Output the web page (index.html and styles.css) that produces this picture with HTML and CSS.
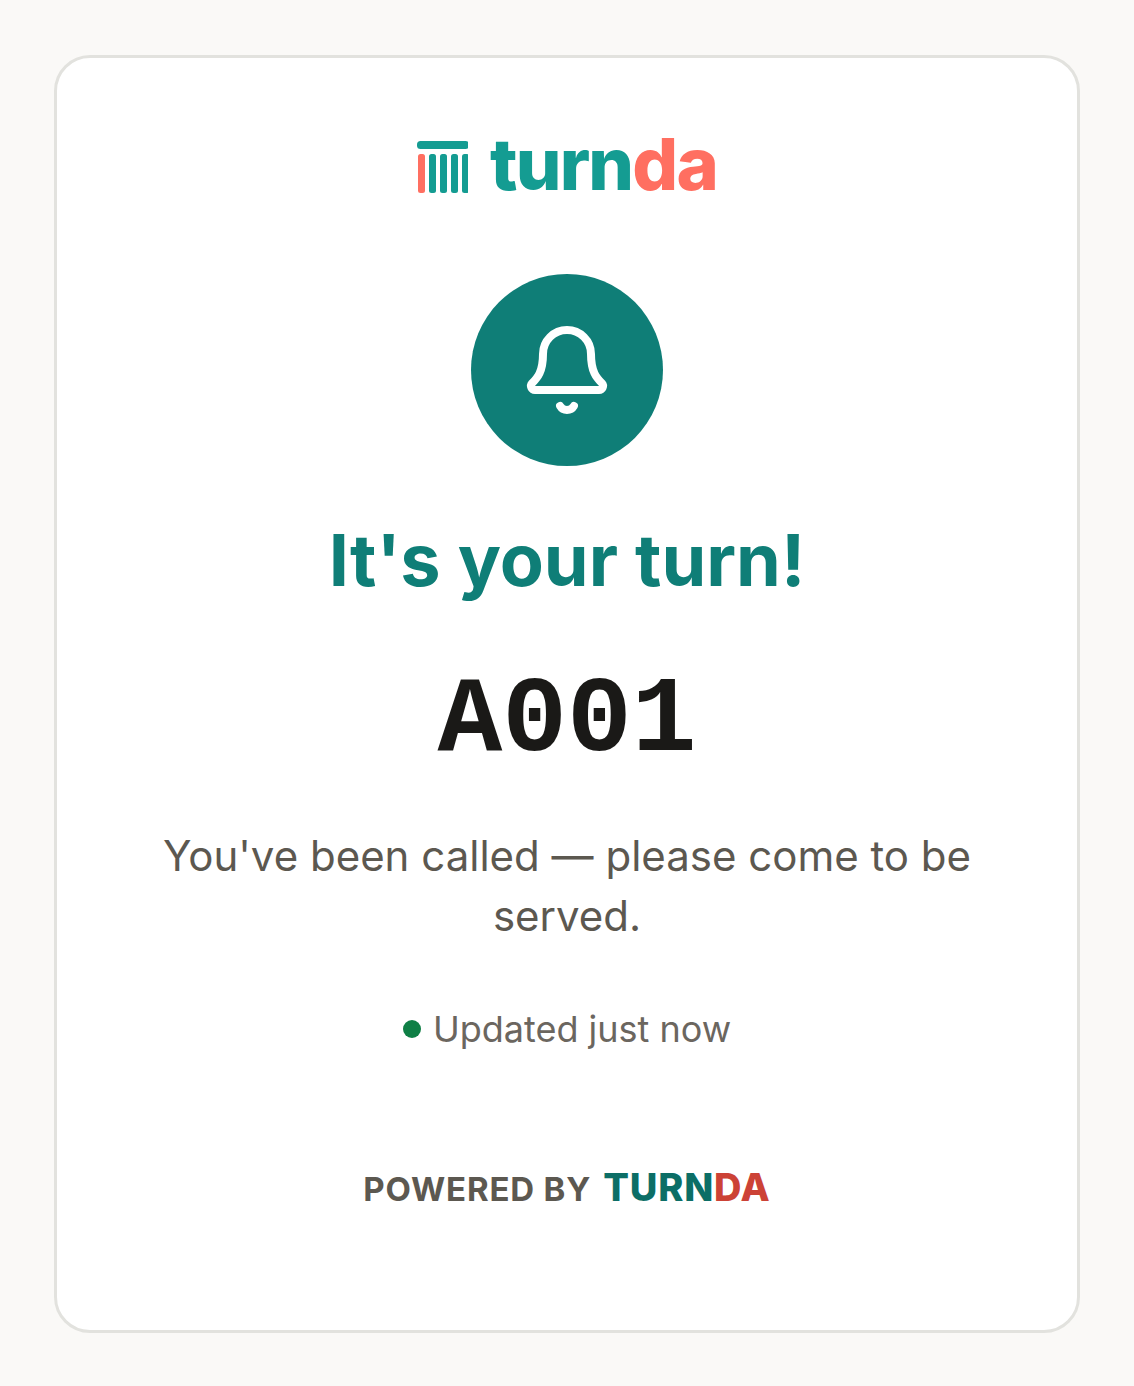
FILE: index.html
```html
<!DOCTYPE html>
<html lang="en">
<head>
  <meta charset="UTF-8">
  <meta name="viewport" content="width=device-width, initial-scale=1">
  <title>Turnda</title>
  <link rel="stylesheet" href="styles.css">
</head>
<body>
  <main class="card">
    <div class="logo">
      <svg class="logo-mark" viewBox="0 -6 51 58" aria-hidden="true">
        <rect x="0" y="0" width="52" height="8" rx="3.5" fill="#149c92"/>
        <rect x="1" y="13" width="7" height="39" rx="2.5" fill="#ff6f61"/>
        <g fill="#149c92">
          <rect x="12" y="13" width="7" height="39" rx="2.5"/>
          <rect x="23" y="13" width="7" height="39" rx="2.5"/>
          <rect x="34" y="13" width="7" height="39" rx="2.5"/>
          <rect x="45" y="13" width="7" height="39" rx="2.5"/>
        </g>
      </svg>
      <span class="logo-text">turn<span class="logo-accent">da</span></span>
    </div>

    <div class="bell">
      <svg class="bell-icon" viewBox="0 0 24 24" aria-hidden="true">
        <path d="M3.262 15.326A1 1 0 0 0 4 17h16a1 1 0 0 0 .74-1.673C19.41 13.956 18 12.499 18 8A6 6 0 0 0 6 8c0 4.499-1.411 5.956-2.738 7.326"/>
        <path d="M10.268 21a2 2 0 0 0 3.464 0"/>
      </svg>
    </div>

    <h1 class="title">It's your turn!</h1>
    <p class="code">A001</p>
    <p class="message">You've been called — please come to be served.</p>
    <p class="status"><span class="dot"></span>Updated just now</p>

    <footer class="powered">
      <span>Powered by</span>
      <span class="brand">Turn<span class="brand-accent">da</span></span>
    </footer>
  </main>
</body>
</html>
```
FILE: styles.css
```css
* {
  box-sizing: border-box;
}
body {
  margin: 0;
  padding: 55px 54px;
  background: #faf9f7;
  color: #1a1917;
  font-family: Inter, sans-serif;
}
h1, p {
  margin: 0;
}
.card {
  display: flex;
  flex-direction: column;
  align-items: center;
  padding: 60px 72px 114px;
  background: #fff;
  border: 3px solid #e2e2de;
  border-radius: 36px;
  text-align: center;
}
.logo {
  display: flex;
  align-items: center;
  gap: 22px;
}
.logo-mark {
  width: 51px;
  height: 58px;
}
.logo-text {
  font-size: 72px;
  font-weight: 800;
  line-height: 92px;
  letter-spacing: -0.025em;
  color: #149c92;
}
.logo-accent {
  color: #ff6f61;
}
.bell {
  display: flex;
  align-items: center;
  justify-content: center;
  width: 192px;
  height: 192px;
  margin-top: 64px;
  border-radius: 50%;
  background: #0f7e77;
}
.bell-icon {
  width: 96px;
  height: 96px;
  fill: none;
  stroke: #fff;
  stroke-width: 2;
  stroke-linecap: round;
  stroke-linejoin: round;
}
.title {
  margin-top: 48px;
  font-size: 72px;
  font-weight: 700;
  line-height: 92px;
  color: #0f7e77;
}
.code {
  margin-top: 55px;
  font-family: "Courier New", "Liberation Mono", monospace;
  font-size: 108px;
  font-weight: 700;
  line-height: 120px;
}
.message {
  margin-top: 45px;
  font-size: 42px;
  line-height: 60px;
  color: #5c5850;
}
.status {
  display: flex;
  align-items: center;
  gap: 12px;
  margin-top: 56px;
  font-size: 36px;
  line-height: 54px;
  color: #6b665f;
}
.dot {
  width: 18px;
  height: 18px;
  border-radius: 50%;
  background: #0f7f45;
}
.powered {
  display: flex;
  align-items: baseline;
  gap: 12px;
  margin-top: 104px;
  font-size: 33px;
  font-weight: 700;
  line-height: 54px;
  letter-spacing: 0.025em;
  text-transform: uppercase;
  color: #5c5850;
}
.brand {
  font-size: 38px;
  font-weight: 800;
  color: #0c6e66;
}
.brand-accent {
  color: #cc4236;
}
```
